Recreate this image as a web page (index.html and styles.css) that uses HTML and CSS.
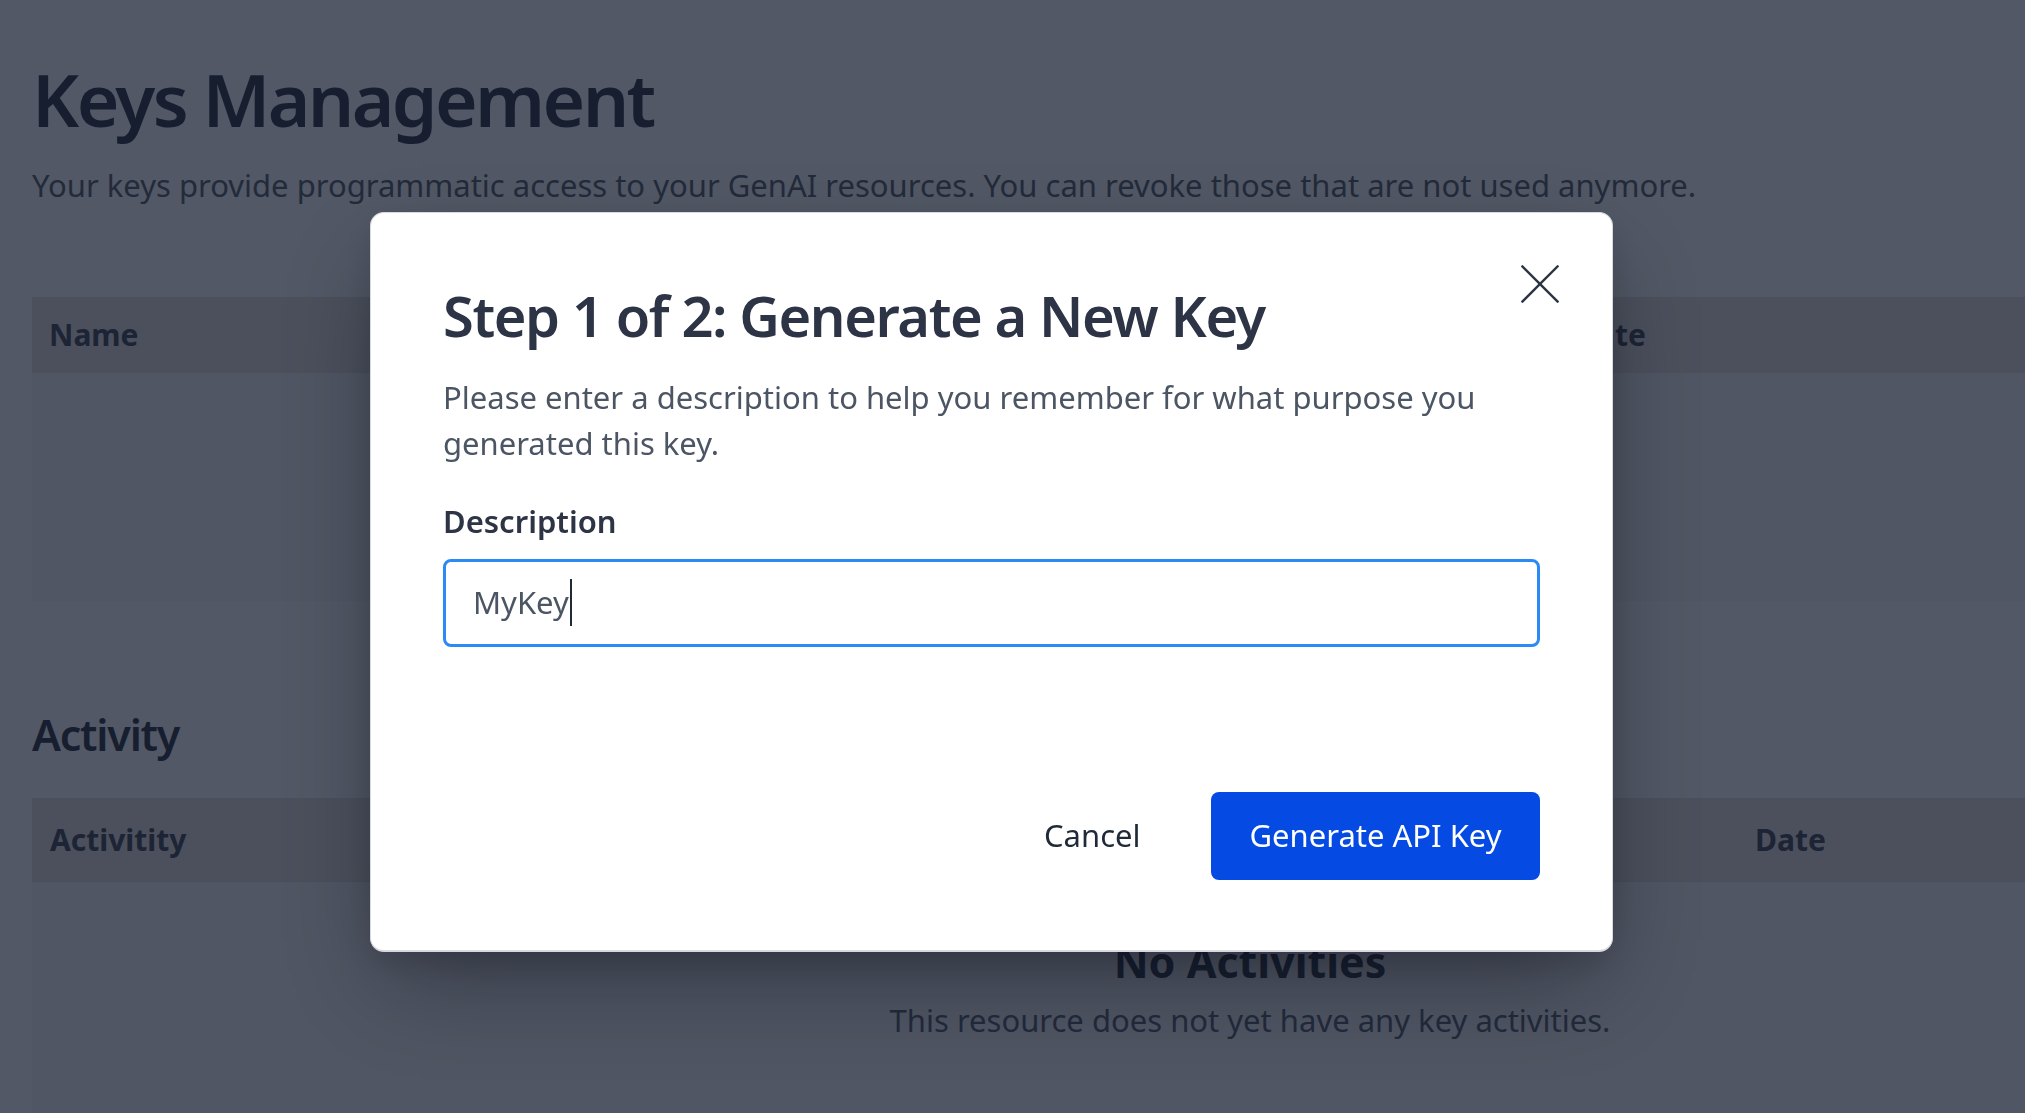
FILE: index.html
```html
<!DOCTYPE html>
<html lang="en">
<head>
<meta charset="utf-8">
<title>Keys Management</title>
<link rel="stylesheet" href="styles.css">
</head>
<body>
<main class="page">
  <h1 class="page-title">Keys Management</h1>
  <p class="page-sub">Your keys provide programmatic access to your GenAI resources. You can revoke those that are not used anymore.</p>

  <section class="card keys-card">
    <div class="card-head keys-head">
      <span class="col col-name">Name</span>
      <span class="col col-created">Date</span>
    </div>
    <div class="card-body keys-body"></div>
  </section>

  <h2 class="section-title">Activity</h2>
  <section class="card act-card">
    <div class="card-head act-head">
      <span class="col col-act">Activitity</span>
      <span class="col col-date">Date</span>
    </div>
    <div class="card-body act-body">
      <div class="empty">
        <h3 class="empty-title">No Activities</h3>
        <p class="empty-text">This resource does not yet have any key activities.</p>
      </div>
    </div>
  </section>
</main>

<div class="overlay">
  <div class="modal" role="dialog">
    <button class="close" aria-label="Close">
      <svg width="38" height="38" viewBox="0 0 38 38" fill="none" stroke="currentColor" stroke-width="2.4" stroke-linecap="square">
        <line x1="1.5" y1="1.5" x2="36.5" y2="36.5"/>
        <line x1="36.5" y1="1.5" x2="1.5" y2="36.5"/>
      </svg>
    </button>
    <h2 class="modal-title">Step 1 of 2: Generate a New Key</h2>
    <p class="modal-desc">Please enter a description to help you remember for what purpose you generated this key.</p>
    <label class="field-label" for="desc">Description</label>
    <div class="input"><span class="input-text">MyKey</span><span class="caret"></span></div>
    <div class="actions">
      <button class="btn btn-cancel">Cancel</button>
      <button class="btn btn-primary">Generate API Key</button>
    </div>
  </div>
</div>
</body>
</html>
```

FILE: styles.css
```css
* { box-sizing: border-box; }
html, body {
  margin: 0;
  padding: 0;
  overflow: hidden;
  width: 2025px;
  height: 1113px;
}
body {
  background: #525865;
  font-family: "Noto Sans", "Open Sans", sans-serif;
  color: #1a2233;
}
.page {
  width: 2468px;
  padding: 54px 0 0 32px;
}
.page-title {
  margin: 0;
  font-size: 73px;
  line-height: 90px;
  font-weight: 600;
  color: #161e2f;
  letter-spacing: -2.6px;
}
.page-sub {
  margin: 18px 0 0;
  font-size: 31px;
  line-height: 46.5px;
  color: #232b3b;
}
.card {
  background: #505663;
}
.keys-card { margin-top: 88px; }
.card-head {
  display: flex;
  align-items: center;
  background: #4b505c;
  border-bottom: 1px solid #4a4f5b;
  font-size: 30px;
  line-height: 45px;
  font-weight: 700;
  color: #1c2435;
}
.keys-head { padding: 15px 17px; }
.act-head { padding: 19px 18px 19px; }
.col-name { width: 1526px; }
.col-act { width: 1705px; }
.keys-body { height: 228px; }
.section-title {
  margin: 102px 0 0;
  font-size: 43px;
  line-height: 64.5px;
  font-weight: 600;
  letter-spacing: -1.2px;
  color: #161e2f;
}
.act-card { margin-top: 31px; }
.act-body { height: 400px; }
.empty {
  padding-top: 50px;
  text-align: center;
}
.empty-title {
  margin: 0;
  font-size: 43px;
  line-height: 60px;
  font-weight: 700;
  color: #161e2f;
}
.empty-text {
  margin: 5px 0 0;
  font-size: 31px;
  line-height: 46.5px;
  color: #232b3b;
}

/* Modal */
.overlay {
  position: fixed;
  inset: 0;
}
.modal {
  position: absolute;
  left: 370px;
  top: 212px;
  width: 1243px;
  height: 740px;
  background: #ffffff;
  border: 1px solid #d7d9de;
  border-bottom-width: 2px;
  border-radius: 14px;
  padding: 68.5px 72px 72px 72px;
  box-shadow: 0 40px 90px -20px rgba(10, 14, 24, 0.45), 0 10px 30px rgba(10, 14, 24, 0.12);
  display: flex;
  flex-direction: column;
}
.close {
  position: absolute;
  top: 52px;
  right: 53px;
  width: 38px;
  height: 38px;
  padding: 0;
  border: 0;
  background: none;
  color: #2b3344;
  display: flex;
}
.modal-title {
  margin: 0;
  font-size: 56px;
  line-height: 67.5px;
  font-weight: 600;
  letter-spacing: -1.4px;
  color: #2d3446;
}
.modal-desc {
  margin: 24.5px 0 0;
  font-size: 31px;
  line-height: 46.5px;
  color: #4b5563;
}
.field-label {
  display: block;
  margin-top: 31.5px;
  font-size: 31px;
  line-height: 46.5px;
  font-weight: 600;
  color: #2d3446;
}
.input {
  margin-top: 14px;
  height: 88px;
  flex: none;
  border: 3px solid #2b8af6;
  border-radius: 8px;
  padding: 0 27px;
  display: flex;
  align-items: center;
  font-size: 31px;
  line-height: 46.5px;
  color: #4b5563;
}
.caret {
  display: inline-block;
  width: 2px;
  height: 47px;
  background: #1f2937;
  margin-left: 1px;
}
.actions {
  margin-top: 145px;
  display: flex;
  justify-content: flex-end;
  gap: 32px;
}
.btn {
  font-family: inherit;
  font-size: 31px;
  line-height: 46.5px;
  height: 88px;
  padding: 0 38.5px;
  border: 0;
  border-radius: 8px;
  cursor: pointer;
}
.btn-cancel {
  background: transparent;
  color: #1f2937;
}
.btn-primary {
  background: #064ae4;
  color: #ffffff;
}
```
